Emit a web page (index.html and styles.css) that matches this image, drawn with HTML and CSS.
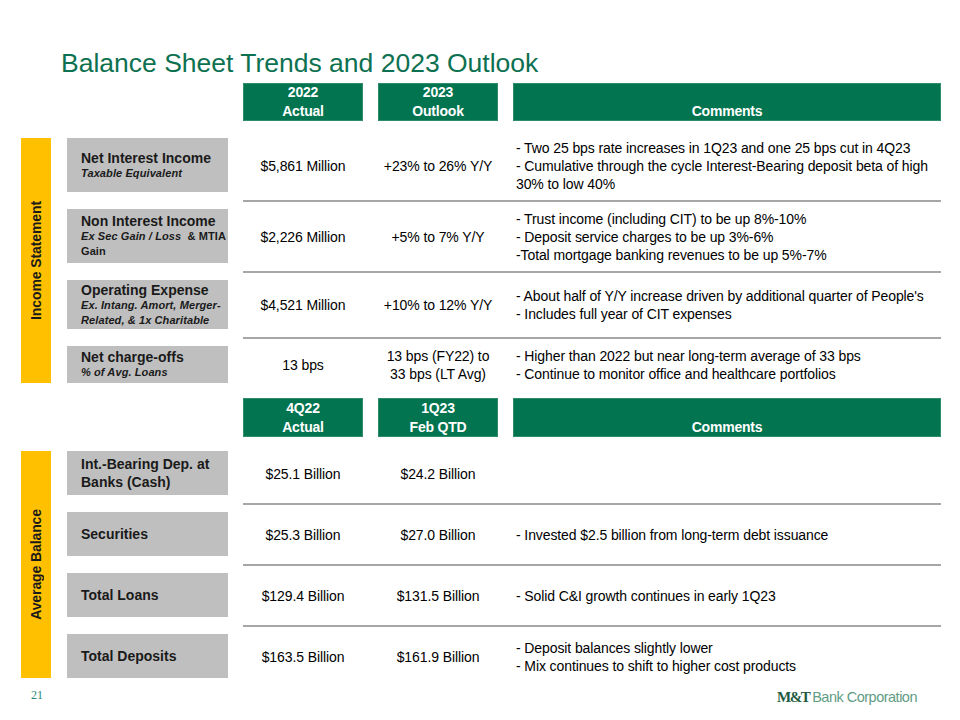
FILE: index.html
```html
<!DOCTYPE html>
<html lang="en">
<head>
<meta charset="utf-8">
<title>Balance Sheet Trends and 2023 Outlook</title>
<link rel="stylesheet" href="styles.css">
</head>
<body>
<div class="slide">
  <h1 class="title">Balance Sheet Trends and 2023 Outlook</h1>

  <div class="head">
    <div class="hbox"><span>2022</span><span>Actual</span></div>
    <div class="hbox"><span>2023</span><span>Outlook</span></div>
    <div class="hbox wide"><span>&nbsp;</span><span>Comments</span></div>
  </div>

  <div class="section">
    <div class="sidebar"><span>Income Statement</span></div>
    <div class="rows">
      <div class="row">
        <div class="label tall">
          <div class="lt">Net Interest Income</div>
          <div class="ls">Taxable Equivalent</div>
        </div>
        <div class="data">
          <div class="val">$5,861 Million</div>
          <div class="val">+23% to 26% Y/Y</div>
          <div class="comment">- Two 25 bps rate increases in 1Q23 and one 25 bps cut in 4Q23<br>- Cumulative through the cycle Interest-Bearing deposit beta of high 30% to low 40%</div>
        </div>
      </div>
      <div class="row">
        <div class="label tall">
          <div class="lt">Non Interest Income</div>
          <div class="ls">Ex Sec Gain / Loss&nbsp; <span class="up">&amp; MTIA</span><br><span class="up">Gain</span></div>
        </div>
        <div class="data">
          <div class="val">$2,226 Million</div>
          <div class="val">+5% to 7% Y/Y</div>
          <div class="comment">- Trust income (including CIT) to be up 8%-10%<br>- Deposit service charges to be up 3%-6%<br>-Total mortgage banking revenues to be up 5%-7%</div>
        </div>
      </div>
      <div class="row">
        <div class="label mid">
          <div class="lt">Operating Expense</div>
          <div class="ls">Ex. Intang. Amort, Merger-<br>Related, &amp; 1x Charitable</div>
        </div>
        <div class="data">
          <div class="val">$4,521 Million</div>
          <div class="val">+10% to 12% Y/Y</div>
          <div class="comment">- About half of Y/Y increase driven by additional quarter of People's<br>- Includes full year of CIT expenses</div>
        </div>
      </div>
      <div class="row">
        <div class="label short">
          <div class="lt">Net charge-offs</div>
          <div class="ls">% of Avg. Loans</div>
        </div>
        <div class="data">
          <div class="val">13 bps</div>
          <div class="val">13 bps (FY22) to<br>33 bps (LT Avg)</div>
          <div class="comment">- Higher than 2022 but near long-term average of 33 bps<br>- Continue to monitor office and healthcare portfolios</div>
        </div>
      </div>
    </div>
  </div>

  <div class="head second">
    <div class="hbox"><span>4Q22</span><span>Actual</span></div>
    <div class="hbox"><span>1Q23</span><span>Feb QTD</span></div>
    <div class="hbox wide"><span>&nbsp;</span><span>Comments</span></div>
  </div>

  <div class="section second">
    <div class="sidebar"><span>Average Balance</span></div>
    <div class="rows">
      <div class="row">
        <div class="label bal">
          <div class="lb">Int.-Bearing Dep. at<br>Banks (Cash)</div>
        </div>
        <div class="data">
          <div class="val">$25.1 Billion</div>
          <div class="val">$24.2 Billion</div>
          <div class="comment"></div>
        </div>
      </div>
      <div class="row">
        <div class="label bal">
          <div class="lb">Securities</div>
        </div>
        <div class="data">
          <div class="val">$25.3 Billion</div>
          <div class="val">$27.0 Billion</div>
          <div class="comment">- Invested $2.5 billion from long-term debt issuance</div>
        </div>
      </div>
      <div class="row">
        <div class="label bal">
          <div class="lb">Total Loans</div>
        </div>
        <div class="data">
          <div class="val">$129.4 Billion</div>
          <div class="val">$131.5 Billion</div>
          <div class="comment">- Solid C&amp;I growth continues in early 1Q23</div>
        </div>
      </div>
      <div class="row">
        <div class="label bal">
          <div class="lb">Total Deposits</div>
        </div>
        <div class="data">
          <div class="val">$163.5 Billion</div>
          <div class="val">$161.9 Billion</div>
          <div class="comment">- Deposit balances slightly lower<br>- Mix continues to shift to higher cost products</div>
        </div>
      </div>
    </div>
  </div>

  <div class="footer">
    <div class="pagenum">21</div>
    <div class="logo"><span class="mt">M&amp;T</span><span class="bank">Bank Corporation</span></div>
  </div>
</div>
</body>
</html>
```

FILE: styles.css
```css
* { box-sizing: border-box; }

body {
  margin: 0;
  width: 960px;
  height: 720px;
  overflow: hidden;
  background: #ffffff;
  font-family: "Liberation Sans", Arial, sans-serif;
  color: #000000;
}

.slide {
  width: 960px;
  height: 720px;
}

.title {
  margin: 0;
  padding: 48px 0 0 61px;
  font-size: 26.5px;
  font-weight: normal;
  line-height: 30px;
  color: #0d7151;
}

.head {
  display: flex;
  margin-top: 5px;
  padding-left: 243px;
}

.head.second {
  margin-top: 5px;
}

.hbox {
  width: 120px;
  height: 38px;
  background: #027450;
  border: 1px solid #2f8c69;
  color: #ffffff;
  font-weight: bold;
  font-size: 14px;
  line-height: 19px;
  letter-spacing: -0.2px;
  display: flex;
  flex-direction: column;
  align-items: center;
  justify-content: center;
}

.head.second .hbox {
  height: 39px;
}

.hbox + .hbox {
  margin-left: 15px;
}

.hbox.wide {
  width: 428px;
}

.section {
  display: flex;
  margin-top: 10px;
  padding-left: 21px;
}

.section.second {
  margin-top: 7px;
}

.sidebar {
  width: 30px;
  margin: 7px 16px 10px 0;
  background: #ffc000;
  display: flex;
  align-items: center;
  justify-content: center;
}

.sidebar span {
  writing-mode: vertical-rl;
  transform: rotate(180deg);
  font-weight: bold;
  font-size: 14px;
  color: #1a1a1a;
  letter-spacing: -0.1px;
}

.rows {
  display: flex;
  flex-direction: column;
}

.row {
  display: flex;
}

.label {
  width: 161px;
  margin: 7px 15px 10px 0;
  background: #bfbfbf;
  padding-left: 14px;
  display: flex;
  flex-direction: column;
  justify-content: center;
  color: #1a1a1a;
}

.label.tall { height: 54px; }
.label.mid { height: 49px; }
.label.short { height: 37px; }
.label.bal { height: 44px; }

.lt {
  font-weight: bold;
  font-size: 14px;
  line-height: 16px;
}

.ls {
  font-weight: bold;
  font-style: italic;
  font-size: 11px;
  line-height: 15px;
  letter-spacing: 0.1px;
  white-space: nowrap;
}

.ls .up {
  font-style: normal;
}

.lb {
  font-weight: bold;
  font-size: 14px;
  line-height: 18px;
}

.data {
  display: flex;
  align-items: center;
  width: 698px;
  border-bottom: 2px solid #a6a6a6;
  font-size: 14px;
  line-height: 18px;
  letter-spacing: -0.1px;
}

.row:last-child .data {
  border-bottom-color: transparent;
}

.val {
  width: 120px;
  text-align: center;
}

.val + .val {
  margin-left: 15px;
}

.comment {
  width: 428px;
  margin-left: 15px;
  padding-left: 3px;
}

.footer {
  display: flex;
  justify-content: space-between;
  align-items: flex-start;
  margin-top: 0;
  padding: 0 43px 0 31px;
}

.pagenum {
  font-family: "Liberation Serif", "Times New Roman", serif;
  font-size: 12px;
  line-height: 14px;
  color: #2a8a78;
}

.logo {
  display: flex;
  align-items: baseline;
  line-height: 18px;
}

.mt {
  font-family: "Liberation Serif", "Times New Roman", serif;
  font-weight: bold;
  font-size: 15px;
  letter-spacing: -1.5px;
  color: #1e5b40;
  margin-right: 3px;
}

.bank {
  font-family: "Liberation Sans", Arial, sans-serif;
  font-size: 14.5px;
  letter-spacing: -0.5px;
  color: #5f9d84;
}
```
